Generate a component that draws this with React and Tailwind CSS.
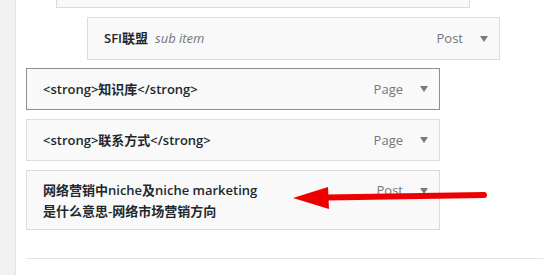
import React from 'react'

const FONT = { fontFamily: '"Open Sans", "Noto Sans CJK SC", sans-serif' }

function Caret() {
  return (
    <svg width="8" height="6" viewBox="0 0 8 6" className="shrink-0">
      <path d="M0 0 L8 0 L4 6 Z" fill="#787c82" />
    </svg>
  )
}

function MenuItem({ title, note, type, className = '', tall = false }) {
  return (
    <div
      className={`flex justify-between bg-[#f9f9f9] border ${tall ? 'items-start pt-[9px]' : 'items-center'} pl-[16px] pr-[11px] ${className}`}
    >
      <div className="text-[13px] leading-[21px] font-semibold text-[#23282d]">
        {title}
        {note && <span className="ml-[7px] font-normal italic text-[#72777c]">{note}</span>}
      </div>
      <div className="flex items-center gap-[17px] text-[13px] leading-[21px] text-[#72777c]">
        <span>{type}</span>
        <Caret />
      </div>
    </div>
  )
}

export default function App() {
  return (
    <div className="relative flex w-[543px] h-[275px] bg-white overflow-hidden" style={FONT}>
      {/* left admin strip */}
      <div className="w-[16px] shrink-0 bg-[#f1f1f1] border-r border-[#e2e4e7]" />

      <div className="flex-1 flex flex-col pl-[10px]">
        {/* previous item, cut off at top */}
        <div className="ml-[30px] w-[414px] h-[8px] bg-[#f9f9f9] border-x border-b border-[#dcdcde]" />

        <MenuItem
          title="SFI联盟"
          note="sub item"
          type="Post"
          className="mt-[9px] ml-[61px] w-[413px] h-[43px] border-[#dcdcde]"
        />
        <MenuItem
          title="<strong>知识库</strong>"
          type="Page"
          className="mt-[8px] w-[414px] h-[42px] border-[#8c8f94]"
        />
        <MenuItem
          title="<strong>联系方式</strong>"
          type="Page"
          className="mt-[9px] w-[414px] h-[42px] border-[#dcdcde]"
        />
        <MenuItem
          tall
          title={
            <>
              <span className="block">网络营销中niche及niche marketing</span>
              <span className="block">是什么意思-网络市场营销方向</span>
            </>
          }
          type="Post"
          className="mt-[9px] w-[414px] h-[60px] border-[#dcdcde]"
        />

        <div className="mt-[28px] border-t border-[#e2e4e7]" />
      </div>

      {/* red annotation arrow */}
      <svg className="absolute left-[290px] top-[183px]" width="200" height="32" viewBox="0 0 200 32">
        <path d="M36 14.5 L194 12" stroke="#ee0000" strokeWidth="6" strokeLinecap="round" />
        <path d="M3 15 L38 4 L39 26 Z" fill="#ee0000" />
      </svg>
    </div>
  )
}
